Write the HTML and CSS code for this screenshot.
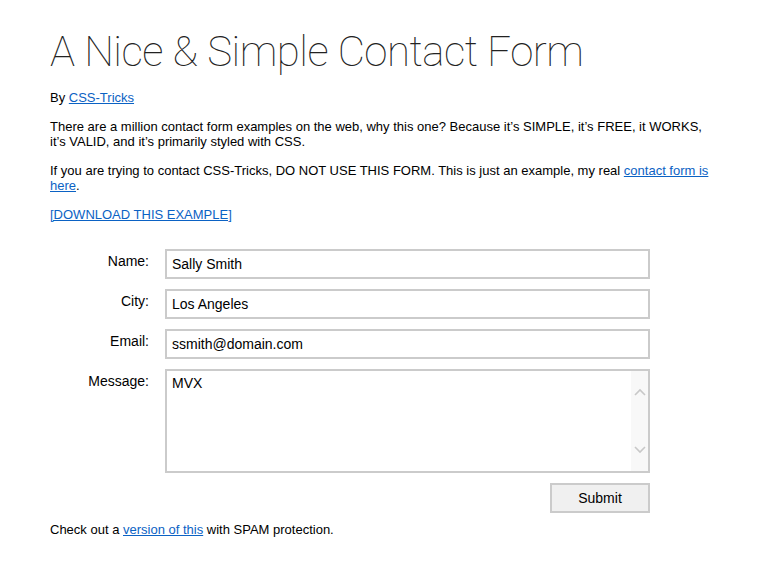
FILE: index.html
```html
<!DOCTYPE html>
<html>
<head>
<meta charset="utf-8">
<title>A Nice &amp; Simple Contact Form</title>
<link rel="stylesheet" href="styles.css">
</head>
<body>
<div class="page">
  <h1 class="title">A Nice &amp; Simple Contact Form</h1>
  <p class="by">By <a href="#">CSS-Tricks</a></p>
  <p>There are a million contact form examples on the web, why this one? Because it’s SIMPLE, it’s FREE, it WORKS, it’s VALID, and it’s primarily styled with CSS.</p>
  <p>If you are trying to contact CSS-Tricks, DO NOT USE THIS FORM. This is just an example, my real <a href="#">contact form is here</a>.</p>
  <p><a href="#">[DOWNLOAD THIS EXAMPLE]</a></p>

  <form class="form">
    <label class="lbl" for="name">Name:</label>
    <input class="field" id="name" type="text" value="Sally Smith">
    <label class="lbl" for="city">City:</label>
    <input class="field" id="city" type="text" value="Los Angeles">
    <label class="lbl" for="email">Email:</label>
    <input class="field" id="email" type="text" value="ssmith@domain.com">
    <label class="lbl" for="msg">Message:</label>
    <div class="area">
      <textarea class="area-text" id="msg">MVX</textarea>
      <div class="scroll">
        <svg class="chev" width="12" height="8" viewBox="0 0 12 8"><path d="M1 7 L6 2 L11 7" fill="none" stroke="#c8c8c8" stroke-width="1.6"/></svg>
        <svg class="chev" width="12" height="8" viewBox="0 0 12 8"><path d="M1 1 L6 6 L11 1" fill="none" stroke="#c8c8c8" stroke-width="1.6"/></svg>
      </div>
    </div>
    <span></span>
    <div class="actions"><button class="submit" type="button">Submit</button></div>
  </form>

  <p class="foot">Check out a <a href="#">version of this</a> with SPAM protection.</p>
</div>
</body>
</html>
```
FILE: styles.css
```css
html, body {
  margin: 0;
  padding: 0;
  background: #fff;
}
body {
  font-family: "Liberation Sans", Arial, sans-serif;
  font-size: 13px;
  line-height: 15px;
  color: #000;
}
.page {
  padding: 26px 50px 0 50px;
  width: 660px;
}
.title {
  font-family: Roboto, "Liberation Sans", sans-serif;
  font-weight: 100;
  font-size: 42px;
  line-height: 52px;
  color: #222;
  margin: 0 0 12px 0;
  letter-spacing: -0.5px;
}
p {
  margin: 0 0 14px 0;
}
a {
  color: #0b62c4;
  text-decoration: underline;
}
.form {
  display: grid;
  grid-template-columns: 99px 485px;
  column-gap: 16px;
  row-gap: 10px;
  margin-top: 27px;
}
.lbl {
  text-align: right;
  font-size: 14px;
  padding-top: 5px;
}
.field {
  box-sizing: border-box;
  height: 30px;
  width: 485px;
  border: 2px solid #cbcbcb;
  padding: 0 5px;
  font-family: "Liberation Sans", Arial, sans-serif;
  font-size: 14px;
  color: #000;
  margin: 0;
  outline: none;
}
.area {
  box-sizing: border-box;
  display: flex;
  height: 104px;
  border: 2px solid #cbcbcb;
}
.area-text {
  flex: 1;
  border: none;
  resize: none;
  outline: none;
  padding: 4px 5px;
  margin: 0;
  font-family: "Liberation Sans", Arial, sans-serif;
  font-size: 14px;
  line-height: 16px;
  color: #000;
}
.scroll {
  width: 17px;
  background: #f8f8f8;
  display: flex;
  flex-direction: column;
  justify-content: space-between;
  align-items: center;
  padding: 17px 0 17px 0;
}
.chev {
  display: block;
}
.actions {
  display: flex;
  justify-content: flex-end;
}
.submit {
  box-sizing: border-box;
  width: 100px;
  height: 30px;
  background: #f0f0f0;
  border: 2px solid #cbcbcb;
  font-family: "Liberation Sans", Arial, sans-serif;
  font-size: 14px;
  color: #000;
  padding: 0;
}
.foot {
  margin-top: 9px;
}
```
